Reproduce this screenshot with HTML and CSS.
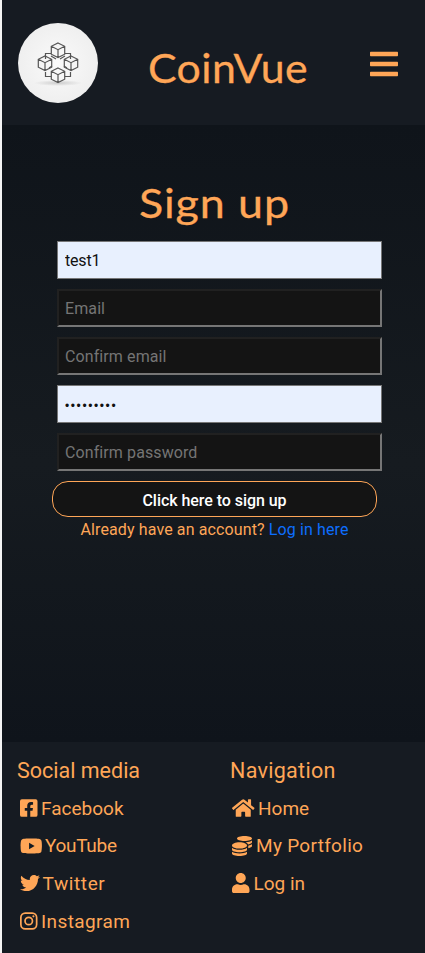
FILE: index.html
```html
<!DOCTYPE html>
<html lang="en">
<head>
<meta charset="utf-8">
<title>CoinVue</title>
<link rel="stylesheet" href="styles.css">
</head>
<body>
<header class="header">
  <svg class="logo" viewBox="0 0 80 80" aria-hidden="true">
    <defs>
      <radialGradient id="disc"><stop offset="0" stop-color="#fafafa"/><stop offset="1" stop-color="#efefef"/></radialGradient>
      <radialGradient id="shade"><stop offset="0" stop-color="#ccc"/><stop offset="1" stop-color="#ccc" stop-opacity="0"/></radialGradient>
      <path id="cube" d="M0-7 6.7-3.7V4.2L0 7.5-6.7 4.2V-3.7ZM-6.7-3.7 0-.3 6.7-3.7M0-.3V7.5"/>
    </defs>
    <circle cx="40" cy="40" r="40" fill="url(#disc)"/>
    <ellipse cx="40" cy="60" rx="24" ry="3" fill="url(#shade)"/>
    <g fill="none" stroke="#555" stroke-width="1.2">
      <path d="M33 30.500H27.500V36M47 30.500H52.500V36M27.500 49V53.500H33M52.500 49V53.500H47M33 33 38 36M47 33 42 36M34 43 31 45M46 43 49 45"/>
      <use href="#cube" x="40" y="27"/>
      <use href="#cube" x="27" y="40"/>
      <use href="#cube" x="53" y="40"/>
      <use href="#cube" x="40" y="52"/>
    </g>
  </svg>
  <h1 class="brand">CoinVue</h1>
  <svg class="menu" viewBox="0 0 448 512" aria-hidden="true"><path d="M16 132h416c8.800 0 16-7.200 16-16V76c0-8.800-7.200-16-16-16H16C7.200 60 0 67.200 0 76v40c0 8.800 7.200 16 16 16zm0 160h416c8.800 0 16-7.200 16-16v-40c0-8.800-7.200-16-16-16H16c-8.800 0-16 7.200-16 16v40c0 8.800 7.200 16 16 16zm0 160h416c8.800 0 16-7.200 16-16v-40c0-8.800-7.200-16-16-16H16c-8.800 0-16 7.200-16 16v40c0 8.800 7.200 16 16 16z"/></svg>
</header>
<main class="main">
  <h2 class="title">Sign up</h2>
  <form class="form">
    <input class="field filled" type="text" value="test1">
    <input class="field" type="text" placeholder="Email">
    <input class="field" type="text" placeholder="Confirm email">
    <input class="field filled password" type="password" value="password1">
    <input class="field" type="text" placeholder="Confirm password">
    <button class="submit" type="button">Click here to sign up</button>
  </form>
  <p class="login">Already have an account? <a class="login-link">Log in here</a></p>
</main>
<footer class="footer">
  <section class="column">
    <h3 class="heading social">Social media</h3>
    <a class="link facebook"><svg class="icon" viewBox="0 0 448 512"><path d="M400 32H48A48 48 0 0 0 0 80v352a48 48 0 0 0 48 48h137.250V327.690h-63V256h63v-54.640c0-62.150 37-96.480 93.670-96.480 27.140 0 55.520 4.840 55.520 4.840v61h-31.270c-30.810 0-40.420 19.120-40.420 38.730V256h68.780l-11 71.690h-57.780V480H400a48 48 0 0 0 48-48V80a48 48 0 0 0-48-48z"/></svg><span>Facebook</span></a>
    <a class="link youtube"><svg class="icon wide" viewBox="0 0 576 512"><path d="M549.655 124.083c-6.281-23.650-24.787-42.276-48.284-48.597C458.781 64 288 64 288 64S117.220 64 74.629 75.486c-23.497 6.322-42.003 24.947-48.284 48.597-11.412 42.867-11.412 132.305-11.412 132.305s0 89.438 11.412 132.305c6.281 23.650 24.787 41.500 48.284 47.821C117.220 448 288 448 288 448s170.780 0 213.371-11.486c23.497-6.321 42.003-24.171 48.284-47.821 11.412-42.867 11.412-132.305 11.412-132.305s0-89.438-11.412-132.305zm-317.510 213.508V175.185l142.739 81.205-142.739 81.201z"/></svg><span>YouTube</span></a>
    <a class="link twitter"><svg class="icon square" viewBox="0 0 512 512"><path d="M459.370 151.716c.325 4.548.325 9.097.325 13.645 0 138.720-105.583 298.558-298.558 298.558-59.452 0-114.680-17.219-161.137-47.106 8.447.974 16.568 1.299 25.340 1.299 49.055 0 94.213-16.568 130.274-44.832-46.132-.975-84.792-31.188-98.112-72.772 6.498.974 12.995 1.624 19.818 1.624 9.421 0 18.843-1.300 27.614-3.573-48.081-9.747-84.143-51.980-84.143-102.985v-1.299c13.969 7.797 30.214 12.670 47.431 13.319-28.264-18.843-46.781-51.005-46.781-87.391 0-19.492 5.197-37.360 14.294-52.954 51.655 63.675 129.300 105.258 216.365 109.807-1.624-7.797-2.599-15.918-2.599-24.040 0-57.828 46.782-104.934 104.934-104.934 30.213 0 57.502 12.670 76.670 33.137 23.715-4.548 46.456-13.320 66.599-25.340-7.798 24.366-24.366 44.833-46.132 57.827 21.117-2.273 41.584-8.122 60.426-16.243-14.292 20.791-32.161 39.308-52.628 54.253z"/></svg><span>Twitter</span></a>
    <a class="link instagram"><svg class="icon" viewBox="0 0 448 512"><rect x="22" y="54" width="404" height="404" rx="112" fill="none" stroke="currentColor" stroke-width="44"/><circle cx="224" cy="256" r="95" fill="none" stroke="currentColor" stroke-width="44"/><circle cx="343.700" cy="136.300" r="27"/></svg><span>Instagram</span></a>
  </section>
  <section class="column">
    <h3 class="heading navigation">Navigation</h3>
    <a class="link home"><svg class="icon wide" viewBox="0 0 576 512"><path d="M280.370 148.260L96 300.110V464a16 16 0 0 0 16 16l112.060-.290a16 16 0 0 0 15.920-16V368a16 16 0 0 1 16-16h64a16 16 0 0 1 16 16v95.640a16 16 0 0 0 16 16.050L464 480a16 16 0 0 0 16-16V300L295.670 148.260a12.190 12.190 0 0 0-15.300 0zM571.600 251.470L488 182.560V44.050a12 12 0 0 0-12-12h-56a12 12 0 0 0-12 12v72.610L318.470 43a48 48 0 0 0-61 0L4.340 251.470a12 12 0 0 0-1.600 16.900l25.500 31A12 12 0 0 0 45.150 301l235.220-193.740a12.190 12.190 0 0 1 15.300 0L530.900 301a12 12 0 0 0 16.900-1.600l25.500-31a12 12 0 0 0-1.700-16.930z"/></svg><span>Home</span></a>
    <a class="link portfolio"><svg class="icon square" viewBox="0 0 512 512"><path d="M0 405.300V448c0 35.300 86 64 192 64s192-28.700 192-64v-42.700C342.700 434.400 267.200 448 192 448S41.300 434.400 0 405.300zM320 128c106 0 192-28.700 192-64S426 0 320 0 128 28.700 128 64s86 64 192 64zM0 300.400V352c0 35.300 86 64 192 64s192-28.700 192-64v-51.600c-41.300 34-116.900 51.600-192 51.600S41.300 334.400 0 300.400zm416 11c57.300-11.100 96-31.700 96-55.400v-42.700c-23.200 16.400-57.300 27.600-96 34.500v63.600zM192 160C86 160 0 195.800 0 240s86 80 192 80 192-35.800 192-80-86-80-192-80zm219.300 56.300c60-10.800 100.700-32 100.700-56.300v-42.700c-35.500 25.100-96.500 38.600-160.700 41.800 29.500 14.300 51.200 33.500 60 57.200z"/></svg><span>My Portfolio</span></a>
    <a class="link account"><svg class="icon" viewBox="0 0 448 512"><path d="M224 256c70.700 0 128-57.300 128-128S294.700 0 224 0 96 57.300 96 128s57.300 128 128 128zm89.600 32h-16.700c-22.200 10.200-46.900 16-72.900 16s-50.600-5.800-72.900-16h-16.700C60.200 288 0 348.200 0 422.400V464c0 26.500 21.500 48 48 48h352c26.500 0 48-21.500 48-48v-41.600c0-74.200-60.200-134.400-134.400-134.400z"/></svg><span>Log in</span></a>
  </section>
</footer>
</body>
</html>
```
FILE: styles.css
```css
* { box-sizing: border-box; }
body {
  margin: 0;
  height: 953px;
  border-left: 2px solid #f4f4f4;
  display: flex;
  flex-direction: column;
  overflow: hidden;
  background: #161b22;
  color: #ffa657;
  font-family: Roboto, sans-serif;
  font-size: 16px;
}
h1, h2, h3, p { margin: 0; font-weight: 400; }
svg { display: block; fill: currentColor; flex: none; }
.header {
  height: 125px;
  flex: none;
  display: flex;
  align-items: flex-start;
  padding: 23px 27px 0 16px;
}
.logo { width: 80px; height: 80px; }
.brand, .title {
  font-family: Lato, sans-serif;
  font-size: 40px;
  line-height: 48px;
  white-space: nowrap;
  -webkit-text-stroke: 0.3px currentColor;
}
.brand {
  margin: 21px 0 0 50px;
  transform: scaleX(1.07);
  transform-origin: left;
  letter-spacing: 0.4px;
}
.menu { width: 28px; height: 32px; margin: 25px 0 0 auto; }
.main {
  height: 617px;
  flex: none;
  background: linear-gradient(#0f141a, #161b20 55%, #0f141b);
  display: flex;
  flex-direction: column;
  align-items: center;
  padding: 54px 0 0 2px;
}
.title { letter-spacing: 0.8px; word-spacing: 0; transform: scaleX(1.12); }
.form {
  width: 325px;
  margin-top: 14px;
  display: flex;
  flex-direction: column;
  gap: 10px;
}
.field {
  width: 325px;
  height: 38px;
  margin: 0 0 0 5px;
  padding: 1px 6px;
  border: 2px inset #767676;
  border-radius: 0;
  outline: 0;
  background: #141414;
  color: #111;
  font: 16px Roboto, sans-serif;
  letter-spacing: 0.1px;
}
.field::placeholder { color: #757575; opacity: 1; }
.filled { border: 1px solid #767676; padding: 1px 7px; background: #e8f0fe; letter-spacing: -0.2px; }
.password { padding-top: 4px; font: 12px "Liberation Sans", sans-serif; letter-spacing: 1.6px; }
.submit {
  height: 36px;
  padding: 2px 0 0;
  border: 1px solid #ffa657;
  border-radius: 16px;
  background: #141414;
  color: #fff;
  font: 500 16px Roboto, sans-serif;
  letter-spacing: -0.05px;
}
.login { margin-top: 2px; line-height: 22px; white-space: nowrap; letter-spacing: 0.12px; }
.login-link { color: #0d6efd; }
.footer {
  flex: 1;
  display: grid;
  grid-template-columns: 213px 210px;
}
.column { padding: 15px 0 0 15px; }
.heading { font-size: 21.5px; line-height: 28px; }
.navigation { letter-spacing: 0.3px; }
.link {
  display: flex;
  align-items: center;
  height: 24px;
  margin: 11px 0 13.7px 3px;
  gap: 4px;
  font-size: 19px;
  line-height: 24px;
}
.link + .link { margin-top: 0; }
.link span { padding-top: 1px; margin-left: -0.5px; }
.youtube { letter-spacing: -0.3px; }
.youtube .icon { margin-right: -1px; }
.twitter { letter-spacing: 0.6px; }
.twitter .icon { margin-right: -1px; }
.instagram { letter-spacing: 0.4px; }
.home, .portfolio, .account { margin-left: 2px; }
.portfolio { letter-spacing: 0.3px; }
.portfolio span, .account span { margin-left: 0; }
.icon { width: 17.5px; height: 20px; }
.wide { width: 22.5px; }
.square { width: 20px; }
```
